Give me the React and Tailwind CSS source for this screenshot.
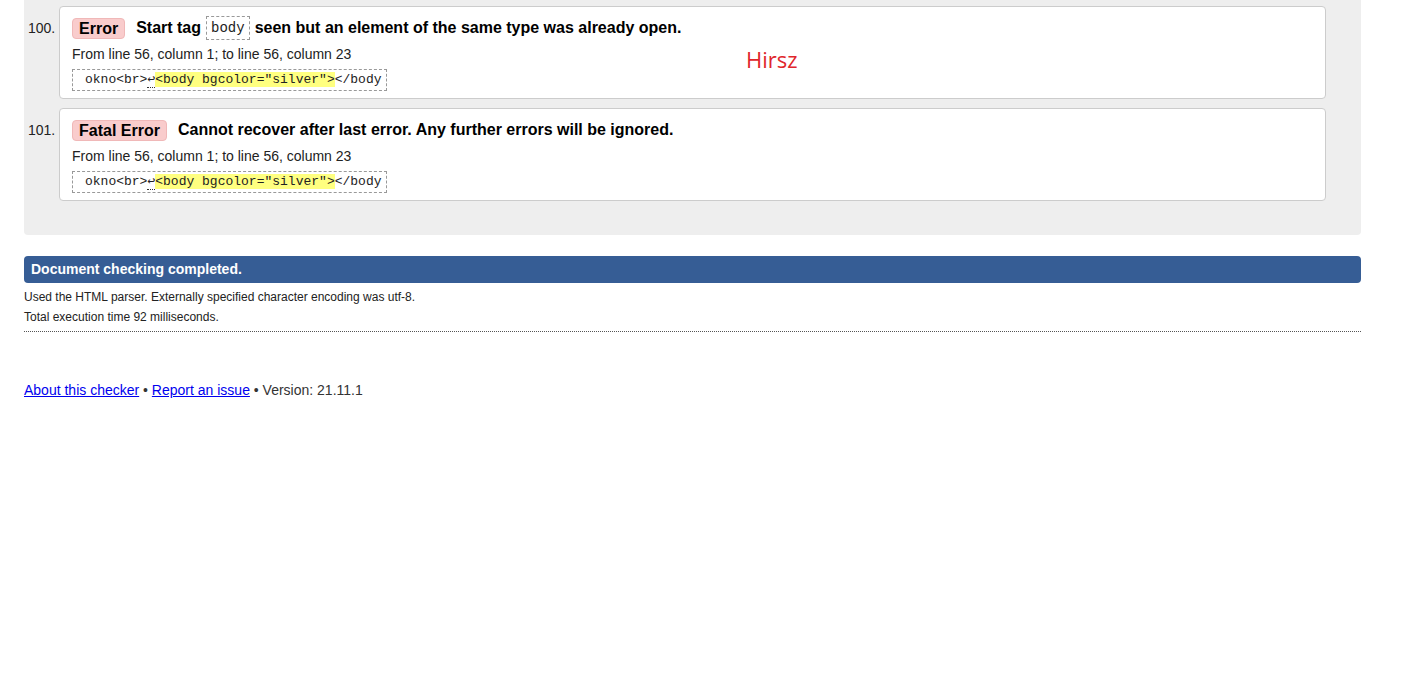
import React from 'react';

const sans = { fontFamily: '"Liberation Sans", Arial, sans-serif' };

const CodeExtract = () => (
  <div className="inline-block border border-dashed border-[#999] pl-[12px] pr-[4px] h-[22px] leading-[20px] text-[13px] text-[#222] font-['Liberation_Mono',monospace] whitespace-pre">
    okno&lt;br&gt;<span className="border-b border-dotted border-[#333]">↩</span>
    <span className="bg-[#ffff80]">&lt;body bgcolor="silver"&gt;</span>&lt;/body
  </div>
);

const Message = ({ num, kind, children }) => (
  <div className="flex">
    <div className="w-[35px] pl-[4px] pt-[12px] text-[14px] text-[#222]">{num}</div>
    <div className="flex-1 bg-white border border-[#ccc] rounded-[4px] pl-[12px] pt-[10px] pb-[8px] h-[93px]">
      <div className="flex items-center h-[22px] text-[16px] font-bold text-black">
        <span className="bg-[#f9cccc] border border-[#f0b8b8] rounded-[4px] px-[6px] h-[21px] leading-[19px] mr-[11px]">{kind}</span>
        {children}
      </div>
      <div className="text-[14px] text-[#222] mt-[6px] leading-[18px]">From line 56, column 1; to line 56, column 23</div>
      <div className="mt-[3px]"><CodeExtract /></div>
    </div>
  </div>
);

export default function App() {
  return (
    <div className="relative bg-white min-h-[682px] px-[24px] w-[1385px]" style={sans}>
      <div className="bg-[#eee] rounded-b-[4px] pt-[6px] pb-[34px] pr-[35px] flex flex-col gap-[9px]">
        <Message num="100." kind="Error">
          <span>Start tag</span>
          <span className="mx-[5px] border border-dashed border-[#999] px-[4px] h-[24px] leading-[22px] font-normal text-[14px] text-[#222] font-['Liberation_Mono',monospace]">body</span>
          <span>seen but an element of the same type was already open.</span>
        </Message>
        <Message num="101." kind="Fatal Error">
          <span>Cannot recover after last error. Any further errors will be ignored.</span>
        </Message>
      </div>

      <div className="absolute left-[746px] top-[43px] text-[22px] text-[#e0262b] font-['Open_Sans',sans-serif]">Hirsz</div>

      <div className="mt-[21px] bg-[#365d95] rounded-[4px] h-[27px] leading-[27px] pl-[7px] text-white font-bold text-[14px]">
        Document checking completed.
      </div>
      <div className="text-[12px] text-[#222] leading-[20px] mt-[4px]">
        <p>Used the HTML parser. Externally specified character encoding was utf-8.</p>
        <p>Total execution time 92 milliseconds.</p>
      </div>
      <div className="border-b border-dotted border-[#555] mt-[4px]"></div>

      <div className="mt-[48px] text-[14px] text-[#333] leading-[20px]">
        <a href="#" className="text-[#0000ee] underline">About this checker</a> •{' '}
        <a href="#" className="text-[#0000ee] underline">Report an issue</a> • Version: 21.11.1
      </div>
    </div>
  );
}
